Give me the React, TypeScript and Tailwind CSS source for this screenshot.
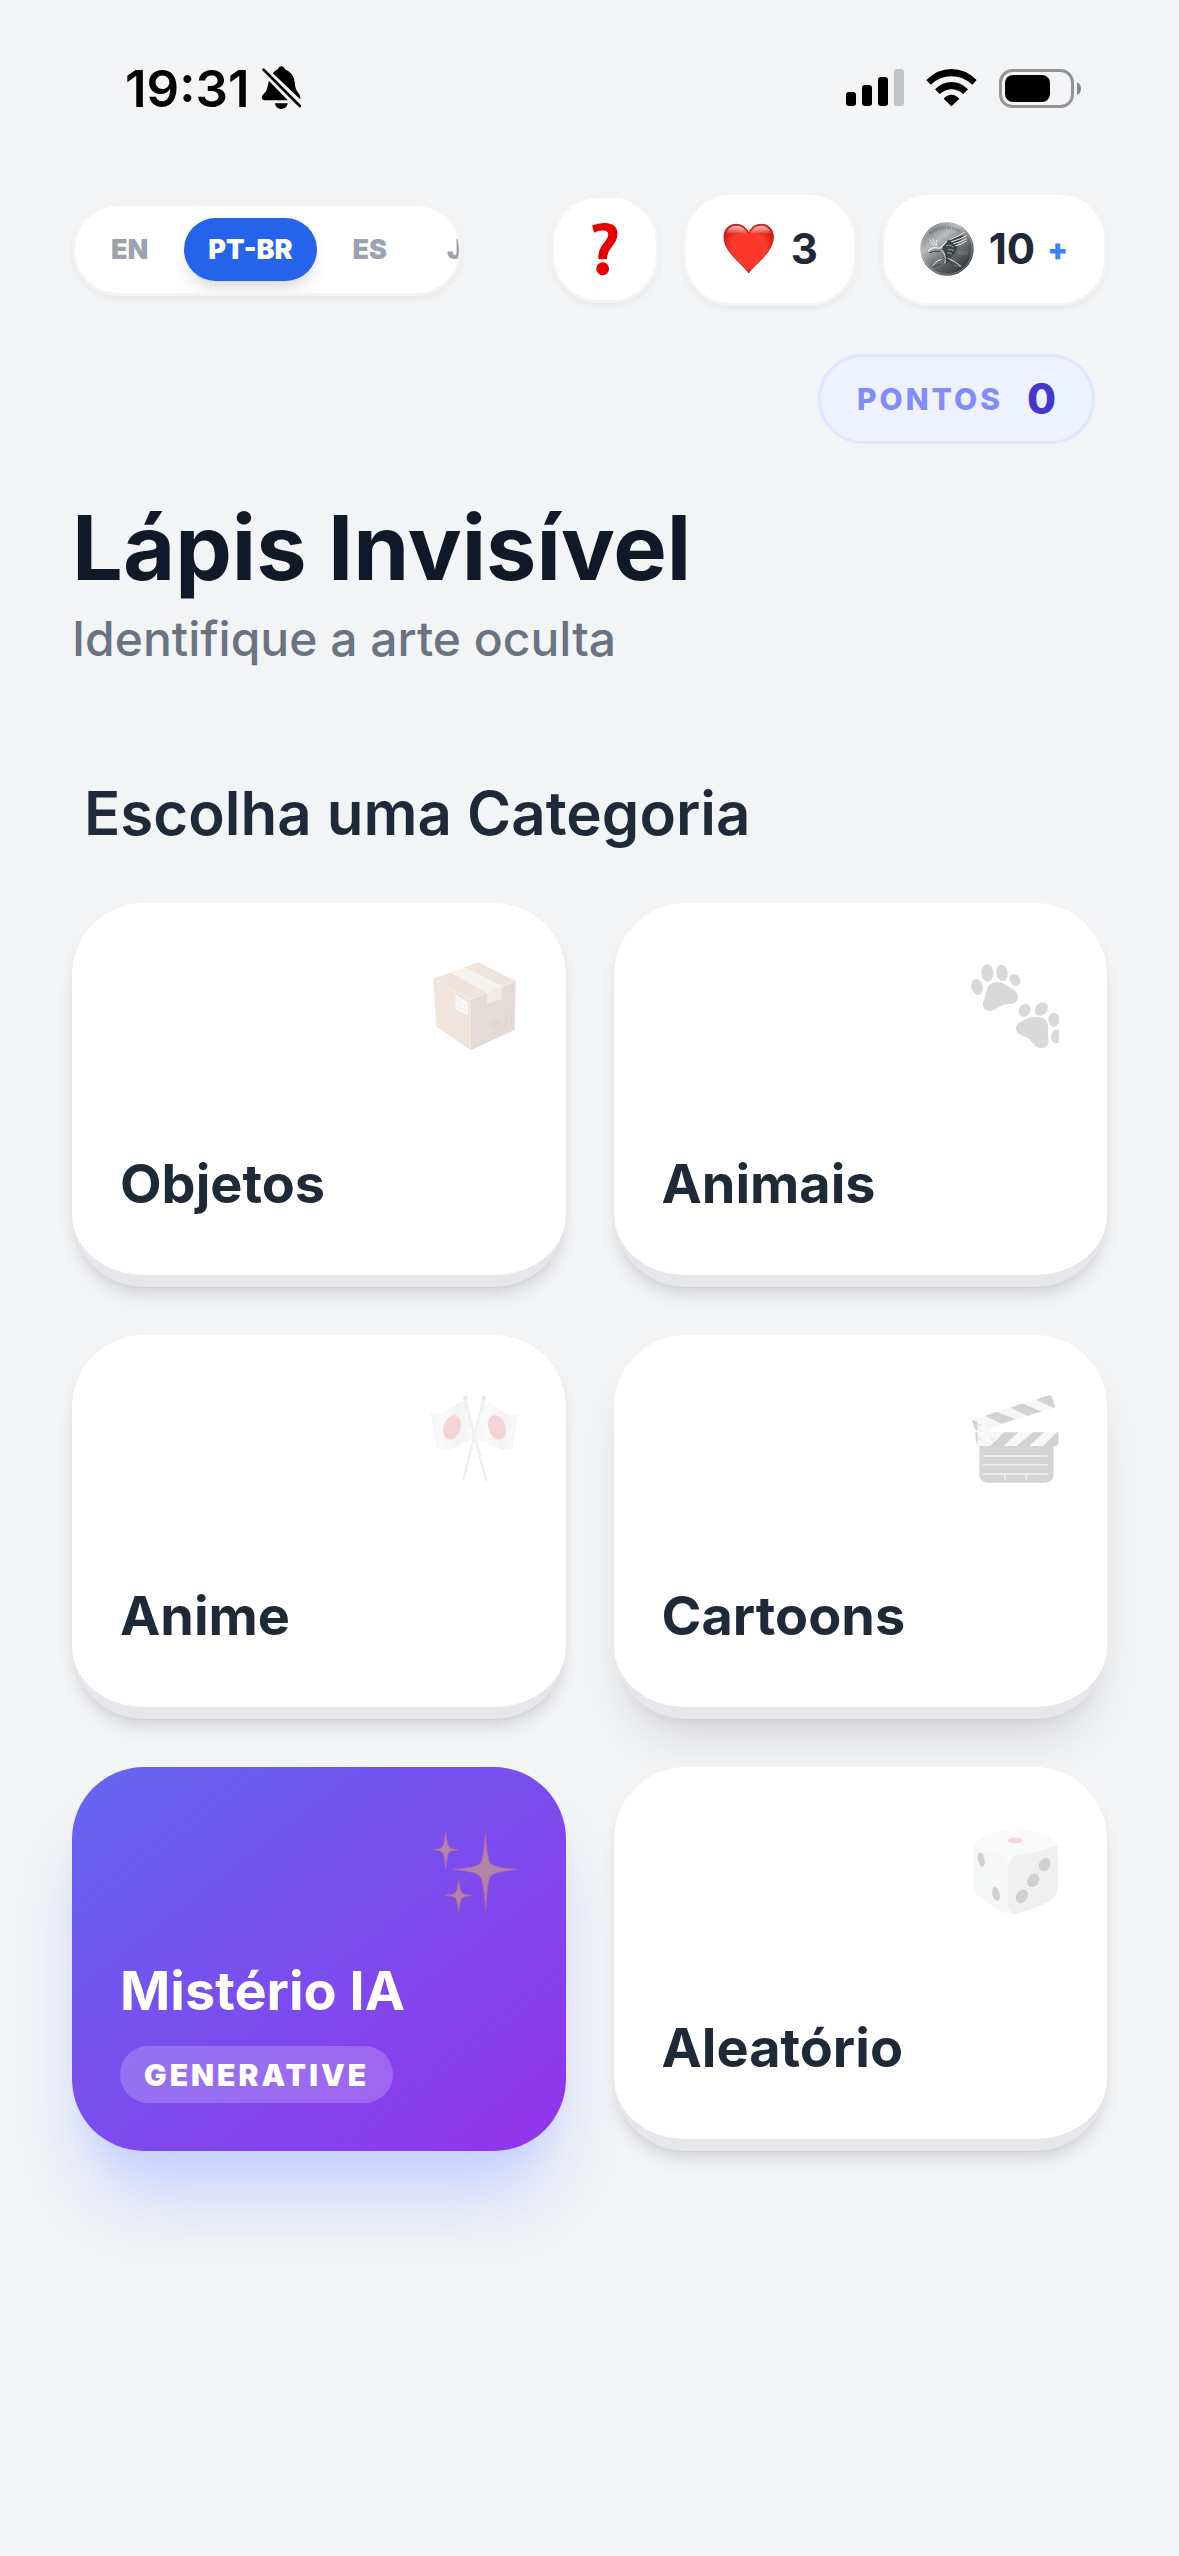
import React, { useState } from "react";
import clsx from "clsx";

const SilentBellIcon = () => (
  <svg viewBox="606 80 122 132" className="w-[41px] h-11" aria-hidden="true">
    <path d="M629 124L686 183H617Q608 183 608 174Q608 168 614 163Q624 154 625 142Z" />
    <path d="M641 102Q647 93 656 90Q659 81 666 81Q674 81 677 90Q704 100 707 130Q708 148 715 157Q724 166 724 178L723 180Z" />
    <path d="M647 192H686Q682 209 666 209Q651 209 647 192Z" />
    <path d="M613 91L722 200" stroke="#000" strokeWidth="8" strokeLinecap="round" />
  </svg>
);

const SignalIcon = () => (
  <svg viewBox="0 0 58 38" className="w-[58px] h-[38px]" aria-hidden="true">
    <rect x="0" y="23" width="10" height="14" rx="3" />
    <rect x="16" y="16" width="10" height="21" rx="3" />
    <rect x="32" y="8" width="10" height="29" rx="3" />
    <rect x="48" y="0" width="10" height="37" rx="3" fill="#c2c3c5" />
  </svg>
);

const WifiIcon = () => (
  <svg viewBox="378 86 153 114" className="w-[51px] h-[38px]" aria-hidden="true">
    <path d="M379 119Q412 86 454.500 86Q497 86 530 119L517 133Q489 108 454.500 108Q420 108 392 133Z" />
    <path d="M405 147Q427 125 454.500 125Q482 125 504 147L490 161Q474 147 454.500 147Q435 147 419 161Z" />
    <path d="M431 175Q442 163 454.500 163Q467 163 478 175L454.500 198Z" />
  </svg>
);

const BatteryIcon = () => (
  <svg viewBox="0 0 82 39" className="w-[82px] h-[39px]" aria-hidden="true">
    <rect x="1.500" y="1.500" width="72" height="36" rx="12" fill="none" stroke="#939496" strokeWidth="3" />
    <rect x="6" y="6" width="45" height="27" rx="8" />
    <path d="M78 13Q82 15 82 19.500Q82 24 78 26Z" fill="#86878a" />
  </svg>
);

const QuestionIcon = () => (
  <svg viewBox="212 154 84 164" className="w-7 h-[54px]" aria-hidden="true">
    <path
      d="M215 165Q234 156 254 157Q293 159 292 192Q291 210 276 228Q260 246 260 267H234Q232 244 244 226Q264 203 264 192Q263 179 246 180Q233 180 221 187Z"
      fill="#e60000"
    />
    <circle cx="247" cy="296" r="19.500" fill="#e60000" />
  </svg>
);

const HeartIcon = () => (
  <svg viewBox="607 160 162 162" className="w-[54px] h-[54px]" aria-hidden="true">
    <defs>
      <radialGradient id="heartFill" cx="0.5" cy="0.5" r="0.6">
        <stop offset="0" stopColor="#ff3526" />
        <stop offset="0.6" stopColor="#fb3a2e" />
        <stop offset="1" stopColor="#c80f0a" />
      </radialGradient>
      <linearGradient id="heartShine" x1="0" y1="0" x2="0" y2="1">
        <stop offset="0" stopColor="#fff" stopOpacity="0.75" />
        <stop offset="1" stopColor="#fff" stopOpacity="0" />
      </linearGradient>
    </defs>
    <path
      d="M687 313C672 288 613 252 613 205C613 182 628 167 649 167C668 167 682 178 687 194C692 178 706 167 725 167C746 167 761 182 761 205C761 252 702 288 687 313Z"
      fill="url(#heartFill)"
      stroke="#c4201c"
      strokeWidth="3"
    />
    <path d="M619 198C621 180 634 171 649 171C665 171 677 179 681 195Q650 186 619 198Z" fill="url(#heartShine)" />
    <path d="M693 195C697 179 709 171 725 171C740 171 753 180 755 198Q724 186 693 195Z" fill="url(#heartShine)" />
  </svg>
);

const CoinIcon = () => (
  <svg viewBox="361 157 162 162" className="w-[54px] h-[54px]" aria-hidden="true">
    <defs>
      <linearGradient id="coinFace" x1="0.1" y1="0.1" x2="0.75" y2="0.95">
        <stop offset="0" stopColor="#74787a" />
        <stop offset="0.3" stopColor="#b9bcbe" />
        <stop offset="0.5" stopColor="#85898c" />
        <stop offset="0.75" stopColor="#565c5f" />
        <stop offset="1" stopColor="#2f3537" />
      </linearGradient>
    </defs>
    <circle cx="442" cy="238" r="80" fill="url(#coinFace)" />
    <circle cx="442" cy="238" r="76" fill="none" stroke="#c3c6c8" strokeWidth="2" opacity="0.7" />
    <path
      d="M390 192Q410 175 442 174Q466 175 482 186"
      fill="none"
      stroke="#5c6062"
      strokeWidth="9"
      strokeDasharray="4 3"
      opacity="0.5"
    />
    <path d="M432 222Q450 206 468 202L492 196Q484 212 474 222Q474 246 456 262L440 286L432 264Q440 250 428 240Z" fill="#3e4548" />
    <g fill="none" strokeLinecap="round">
      <path d="M386 243Q398 230 420 236Q430 228 440 216" stroke="#eceeef" strokeWidth="4" />
      <path d="M428 242Q440 256 436 280M424 270Q412 270 400 288M446 266Q462 272 484 290" stroke="#dfe1e2" strokeWidth="3" />
      <path d="M450 210Q474 202 494 188M456 216Q480 210 500 198M462 222Q482 218 501 207M468 228Q486 225 499 215" stroke="#f2f3f3" strokeWidth="3" />
      <path d="M390 210L402 228M400 207L407 228M411 212L410 228" stroke="#e2e4e5" strokeWidth="3" />
      <path d="M440 228Q454 224 460 232M446 240Q456 238 462 242M444 250Q452 248 456 252" stroke="#9fa4a6" strokeWidth="3" />
      <path d="M390 249Q404 241 420 245M402 291L420 284M446 274L478 294" stroke="#363c3e" strokeWidth="3" />
      <path d="M478 247H504M478 253H504" stroke="#8f9496" strokeWidth="2" strokeDasharray="5 2" />
      <path d="M463 286L480 291" stroke="#a5676c" strokeWidth="3" />
    </g>
  </svg>
);

const PackageArt = () => (
  <svg viewBox="84 183 270 273" className="size-full">
    <path d="M235 187L349 243L212 300L98 237Z" fill="#b07d55" />
    <path d="M98 237L212 300V454L108 382Z" fill="#b28052" />
    <path d="M212 300L349 243L345 392L212 454Z" fill="#7c4e38" />
    <path d="M98 237L212 300L349 243" fill="none" stroke="#c9a584" strokeWidth="3" />
    <path d="M151 216L196 202L306 259L261 280Z" fill="#d6c6b2" />
    <path d="M261 280L306 259V298L262 313Z" fill="#b5a391" />
    <path d="M174 209L283 270" stroke="#b9a892" strokeWidth="2" />
    <path d="M166 285L203 307V347L166 329Z" fill="#e6e8ea" />
    <path d="M169 294L184 303M169 303L197 318M169 311L184 320M170 322L200 336M190 325L201 331" stroke="#999ea4" strokeWidth="3" />
    <path d="M268 367L299 357Q300 384 284 385Q270 385 268 367Z" fill="#54362c" />
    <path d="M284 384V407M277 408L291 403M319 385V356M334 379V351M312 360L319 351L325 356M328 352L334 344L339 348" fill="none" stroke="#54362c" strokeWidth="4" />
  </svg>
);

const PawsArt = () => (
  <svg viewBox="87 93 270 270" className="size-full">
    <g fill="#464646">
      <ellipse cx="111" cy="171" rx="17" ry="24" transform="rotate(-14 111 171)" />
      <ellipse cx="142" cy="129" rx="18" ry="26" transform="rotate(-4 142 129)" />
      <ellipse cx="186" cy="129" rx="17" ry="25" transform="rotate(-12 186 129)" />
      <ellipse cx="225" cy="150" rx="15" ry="19" transform="rotate(-38 225 150)" />
      <path d="M138 190C142 165 157 156 172 156C194 156 206 171 222 180C235 188 236 202 230 213C221 226 201 219 187 226C173 233 162 243 149 243C132 242 126 229 130 215C133 207 136 201 138 190Z" />
      <ellipse cx="254" cy="241" rx="17" ry="20" transform="rotate(28 254 241)" />
      <ellipse cx="304" cy="237" rx="18" ry="22" transform="rotate(42 304 237)" />
      <ellipse cx="342" cy="269" rx="17" ry="21" />
      <ellipse cx="349" cy="319" rx="16" ry="21" transform="rotate(8 349 319)" />
      <path d="M228 298C226 282 240 275 254 269C269 261 286 258 300 262C317 266 325 277 324 292C323 306 325 320 325 335C323 350 314 355 302 354C280 352 279 334 265 325C254 318 230 316 228 298Z" />
    </g>
  </svg>
);

const FlagsArt = () => (
  <svg viewBox="84 99 270 270" className="size-full">
    <defs>
      <linearGradient id="cloth">
        <stop offset="0" stopColor="#d0d0d2" />
        <stop offset="0.25" stopColor="#ececed" />
        <stop offset="0.6" stopColor="#c6c6c9" />
        <stop offset="1" stopColor="#e2e2e4" />
      </linearGradient>
    </defs>
    <path d="M92 158C132 176 156 124 196 125L226 238C190 235 160 285 110 265Z" fill="url(#cloth)" />
    <path d="M250 122C290 128 315 177 354 160L338 264C300 285 270 240 226 240Z" fill="url(#cloth)" />
    <ellipse cx="156" cy="202" rx="26" ry="37" transform="rotate(18 156 202)" fill="#cd2d3e" />
    <ellipse cx="291" cy="202" rx="26" ry="37" transform="rotate(-18 291 202)" fill="#cd2d3e" />
    <path d="M196 118L259 362M251 118L190 362" stroke="#9b9ba1" strokeWidth="7" />
    <path d="M197 118L260 362M252 118L191 362" stroke="#d8d8dc" strokeWidth="3" />
    <circle cx="196" cy="114" r="7" fill="#8c8ca0" />
    <circle cx="251" cy="114" r="7" fill="#8c8ca0" />
  </svg>
);

const ClapperArt = () => (
  <svg viewBox="87 99 270 273" className="size-full">
    <path d="M94 181L330 105Q337 105 347 142L150 207L105 212Z" fill="#d7d7d8" />
    <path d="M133 168L168 156L226 178L183 192ZM211 143L246 131L306 155L262 168ZM288 119L330 105Q337 105 347 142L340 144ZM94 181L112 187V212H105Z" fill="#282828" />
    <path d="M105 218H357V252Q356 259 350 260H112Q105 255 105 218Z" fill="#dcdcdd" />
    <path d="M192 218H235L190 260H150ZM280 218H314L268 260H229ZM357 218V252Q356 259 350 260H310L352 218ZM105 218H112V256Q105 250 105 218Z" fill="#282828" />
    <path d="M117 260H342V345Q342 371 316 371H143Q117 371 117 345Z" fill="#303030" />
    <path d="M128 290H324M128 317H324M128 345H324M194 345V362M259 345V362" stroke="#d5d5d5" strokeWidth="4" />
    <path d="M112 186L124 186L172 235V240L160 248H112Z" fill="#e4e5e5" />
    <g fill="#9a9d9d">
      <circle cx="118" cy="196" r="6" />
      <circle cx="118" cy="238" r="6" />
      <circle cx="158" cy="238" r="6" />
    </g>
  </svg>
);

const SparklesArt = () => (
  <svg viewBox="84 75 270 270" className="size-full">
    <g fill="#ffdc46" stroke="#f59a2b" strokeWidth="3">
      <path d="M256 100Q261 175 271 190Q284 204 352 208Q284 214 271 229Q261 246 257 333Q252 246 240 229Q228 214 160 208Q228 204 241 190Q252 175 256 100Z" />
      <path d="M137 95Q141 134 147 141Q152 147 176 149Q153 151 147 157Q141 164 137 206Q133 164 127 157Q121 151 101 149Q121 147 127 141Q133 134 137 95Z" />
      <path d="M176 238Q180 273 186 279Q193 285 217 286Q192 288 186 294Q180 300 176 338Q172 300 166 294Q159 288 135 286Q159 285 166 279Q172 273 176 238Z" />
    </g>
  </svg>
);

const DiceArt = () => (
  <svg viewBox="87 75 270 275" className="size-full">
    <path
      d="M235 85Q290 91 330 112Q356 127 357 160V262Q357 291 328 309Q275 336 225 347Q200 349 178 338L119 298Q98 284 98 250V155Q98 128 119 116Q175 90 235 85Z"
      fill="#eaeaea"
    />
    <path d="M104 135Q150 153 183 160Q203 168 203 195V310Q205 340 195 345Q185 343 119 298Q98 284 98 250V155Q98 140 104 135Z" fill="#d7d8d8" />
    <path d="M351 133Q357 143 357 160V262Q357 291 328 309Q275 336 225 347Q203 350 203 310V195Q204 168 225 163Q300 155 351 133Z" fill="#b8b8b8" />
    <path d="M104 137Q150 157 183 163Q203 171 203 195Q206 170 228 165Q305 155 351 134" fill="none" stroke="#eee" strokeWidth="6" />
    <ellipse cx="225" cy="122" rx="22" ry="9" fill="#d2323a" />
    <g fill="#191919">
      <ellipse cx="122" cy="181" rx="10" ry="22" transform="rotate(-12 122 181)" />
      <ellipse cx="167" cy="286" rx="11" ry="22" transform="rotate(-14 167 286)" />
      <ellipse cx="316" cy="196" rx="17" ry="21" transform="rotate(32 316 196)" />
      <ellipse cx="281" cy="244" rx="17" ry="22" transform="rotate(32 281 244)" />
      <ellipse cx="246" cy="293" rx="17" ry="22" transform="rotate(32 246 293)" />
    </g>
  </svg>
);

const languages = ["EN", "PT-BR", "ES", "JP"];

const categories = [
  { id: "objects", label: "Objetos", art: <PackageArt /> },
  { id: "animals", label: "Animais", art: <PawsArt /> },
  { id: "anime", label: "Anime", art: <FlagsArt /> },
  { id: "cartoons", label: "Cartoons", art: <ClapperArt />, raised: true },
  { id: "mystery", label: "Mistério IA", art: <SparklesArt />, badge: "GENERATIVE" },
  { id: "random", label: "Aleatório", art: <DiceArt /> },
];

const pill =
  "flex items-center bg-white border-[3px] border-gray-100 shadow-[0_3px_6px_rgba(0,0,0,0.05)]";

const StatusBar: React.FC = () => (
  <div className="flex items-center justify-between h-48 pb-4 pl-[125px] pr-[98px] text-black">
    <div className="flex items-center gap-3">
      <span className="text-[51px] leading-none font-semibold">19:31</span>
      <SilentBellIcon />
    </div>
    <div className="flex items-center gap-[22px]">
      <SignalIcon />
      <WifiIcon />
      <BatteryIcon />
    </div>
  </div>
);

const App: React.FC = () => {
  const [language, setLanguage] = useState("PT-BR");

  return (
    <div className="min-h-screen bg-[#f3f4f6] font-['Inter',sans-serif] text-[#1f2937]">
      <StatusBar />

      <div className="px-[72px]">
        <header className="flex items-center justify-between">
          <nav className={clsx(pill, "w-[390px] gap-3 p-3 rounded-full overflow-hidden")}>
            {languages.map((lang) => (
              <button
                key={lang}
                onClick={() => setLanguage(lang)}
                className={clsx(
                  "shrink-0 h-[63px] px-6 rounded-full text-[27px] leading-none font-black",
                  lang === language
                    ? "bg-[#2563eb] text-white shadow-[0_12px_18px_-3px_rgba(0,0,0,0.1),0_6px_12px_-6px_rgba(0,0,0,0.1)]"
                    : "text-[#9ca3af]"
                )}
              >
                {lang}
              </button>
            ))}
          </nav>

          <div className="flex items-center gap-6">
            <button aria-label="Ajuda" className={clsx(pill, "justify-center size-[108px] rounded-[48px]")}>
              <QuestionIcon />
            </button>
            <div className={clsx(pill, "h-[114px] gap-[15px] px-9 rounded-[48px]")}>
              <HeartIcon />
              <span className="text-[42px] leading-none font-bold">3</span>
            </div>
            <button className={clsx(pill, "h-[114px] gap-[15px] px-9 rounded-[48px]")}>
              <CoinIcon />
              <span className="flex items-center gap-3">
                <span className="text-[42px] leading-none font-bold">10</span>
                <span className="text-[30px] leading-none font-black text-[#3b82f6]">+</span>
              </span>
            </button>
          </div>
        </header>

        <div className="flex justify-end mt-12 pr-3">
          <div className="flex items-center gap-6 h-[90px] px-9 rounded-full bg-[#eef2ff] border-[3px] border-[#e0e7ff]">
            <span className="text-[30px] leading-none font-extrabold tracking-widest text-[#818cf8]">
              PONTOS
            </span>
            <span className="text-[42px] leading-none font-extrabold text-[#4338ca]">0</span>
          </div>
        </div>

        <div className="mt-12">
          <h1 className="text-[90px] leading-[111px] font-bold text-[#111827]">
            Lápis Invisível
          </h1>
          <p className="text-[48px] leading-[72px] font-medium text-[#6b7280]">
            Identifique a arte oculta
          </p>
        </div>

        <h2 className="mt-24 mb-12 px-3 text-[60px] leading-[84px] font-semibold">
          Escolha uma Categoria
        </h2>

        <div className="grid grid-cols-2 gap-12 pb-24">
          {categories.map((category) => (
            <button
              key={category.id}
              className={clsx(
                "flex flex-col justify-between items-start h-96 px-12 pt-[58px] pb-12 rounded-[72px] text-left",
                category.badge
                  ? "bg-linear-to-br/srgb from-[#6366f1] to-[#9333ea] text-white shadow-[0_60px_75px_-15px_#c7d2fe,0_24px_30px_-18px_#c7d2fe]"
                  : "bg-white border-b-12 border-[#e5e7eb]",
                !category.badge &&
                  (category.raised
                    ? "shadow-[0_30px_45px_-9px_rgba(0,0,0,0.1),0_12px_18px_-12px_rgba(0,0,0,0.1)]"
                    : "shadow-[0_12px_18px_-3px_rgba(0,0,0,0.1),0_6px_12px_-6px_rgba(0,0,0,0.1)]")
              )}
            >
              <span
                aria-hidden="true"
                className={clsx("self-end size-[90px]", category.badge ? "opacity-40" : "opacity-20")}
              >
                {category.art}
              </span>
              <span className="flex flex-col items-start gap-3">
                <span className="text-[54px] leading-[87px] font-bold">{category.label}</span>
                {category.badge && (
                  <span className="flex items-center h-[57px] px-6 rounded-full bg-white/20 text-[30px] leading-none font-black tracking-widest">
                    {category.badge}
                  </span>
                )}
              </span>
            </button>
          ))}
        </div>
      </div>
    </div>
  );
};

export default App;
